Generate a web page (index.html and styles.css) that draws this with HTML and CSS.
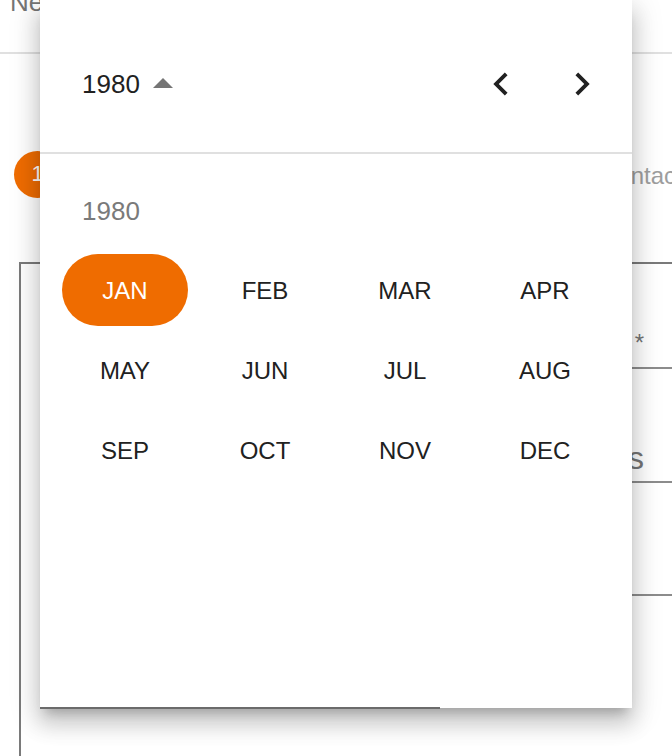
FILE: index.html
```html
<!DOCTYPE html>
<html lang="es">
<head>
<meta charset="utf-8">
<title>Selector de mes</title>
<link rel="stylesheet" href="styles.css">
</head>
<body>
<div class="page">
  <div class="topbar"><span class="topbar-title">New</span></div>
  <div class="stepper">
    <div class="step-circle">1</div>
    <div class="step-label">Contacto</div>
  </div>
  <div class="form-box">
    <div class="fields">
      <div class="field field-1"><span class="field-label">Fecha de nacimiento *</span></div>
      <div class="field field-2"><span class="field-value">Datos</span></div>
      <div class="field field-3"></div>
    </div>
  </div>
</div>

<div class="popup">
  <div class="popup-header">
    <button class="year-switch" type="button">
      <span class="year-text">1980</span>
      <svg class="drop-arrow" width="20" height="10" viewBox="0 0 20 10"><polygon points="0,10 20,10 10,0" fill="#757575"/></svg>
    </button>
    <div class="nav">
      <button class="nav-btn" type="button" aria-label="Anterior">
        <svg width="46" height="46" viewBox="0 0 24 24"><path d="M15.41 7.41 14 6l-6 6 6 6 1.41-1.41L10.83 12z" fill="#212121"/></svg>
      </button>
      <button class="nav-btn" type="button" aria-label="Siguiente">
        <svg width="46" height="46" viewBox="0 0 24 24"><path d="M10 6 8.59 7.41 13.17 12l-4.58 4.59L10 18l6-6z" fill="#212121"/></svg>
      </button>
    </div>
  </div>
  <div class="popup-body">
    <div class="year-label">1980</div>
    <div class="month-grid">
      <div class="cell"><button class="month selected" type="button">JAN</button></div>
      <div class="cell"><button class="month" type="button">FEB</button></div>
      <div class="cell"><button class="month" type="button">MAR</button></div>
      <div class="cell"><button class="month" type="button">APR</button></div>
      <div class="cell"><button class="month" type="button">MAY</button></div>
      <div class="cell"><button class="month" type="button">JUN</button></div>
      <div class="cell"><button class="month" type="button">JUL</button></div>
      <div class="cell"><button class="month" type="button">AUG</button></div>
      <div class="cell"><button class="month" type="button">SEP</button></div>
      <div class="cell"><button class="month" type="button">OCT</button></div>
      <div class="cell"><button class="month" type="button">NOV</button></div>
      <div class="cell"><button class="month" type="button">DEC</button></div>
    </div>
  </div>
  <div class="popup-underline"></div>
</div>
</body>
</html>
```
FILE: styles.css
```css
* { box-sizing: border-box; }
html, body {
  margin: 0;
  padding: 0;
  width: 672px;
  height: 756px;
  overflow: hidden;
  background: #ffffff;
  font-family: "Liberation Sans", Arial, sans-serif;
}
body { position: relative; }

.page { width: 672px; overflow: hidden; height: 756px; }

.topbar {
  height: 54px;
  border-bottom: 2px solid #e0e0e0;
  padding-left: 10px;
  overflow: hidden;
}
.topbar-title {
  display: block;
  margin-top: -13px;
  font-size: 26px;
  line-height: 30px;
  color: #757575;
  white-space: nowrap;
}

.stepper {
  display: flex;
  align-items: center;
  margin-top: 96px;
  padding-left: 14px;
  height: 48px;
  white-space: nowrap;
}
.step-circle {
  width: 47px;
  height: 47px;
  border-radius: 50%;
  background: #ef6c00;
  color: #ffffff;
  font-size: 22px;
  display: flex;
  align-items: center;
  justify-content: center;
  flex: none;
}
.step-label {
  margin-left: 539px;
  font-size: 24px;
  color: #9e9e9e;
  line-height: 28px;
  margin-top: 3px;
  flex: none;
}

.form-box {
  margin-top: 64px;
  margin-left: 19px;
  width: 700px;
  height: 520px;
  border-top: 2px solid #7a7a7a;
  border-left: 2px solid #7a7a7a;
}
.fields {
  margin-left: 380px;
}
.field {
  border-bottom: 2px solid #8c8c8c;
  padding-right: 75px;
  display: flex;
  align-items: flex-end;
  justify-content: flex-end;
  white-space: nowrap;
}
.field-1 { height: 105px; padding-bottom: 10px; }
.field-2 { height: 114px; padding-bottom: 5px; }
.field-3 { height: 113px; }
.field-label {
  font-size: 24px;
  line-height: 28px;
  color: #757575;
}
.field-value {
  font-size: 32px;
  line-height: 36px;
  color: #757575;
}

/* Popup */
.popup {
  position: absolute;
  left: 40px;
  top: 0;
  width: 592px;
  height: 708px;
  background: #ffffff;
  box-shadow: 0 10px 10px -6px rgba(0,0,0,0.2),
              0 16px 20px 2px rgba(0,0,0,0.14),
              0 6px 28px 4px rgba(0,0,0,0.12);
}
.popup-header {
  height: 154px;
  padding: 16px 27px 0 42px;
  border-bottom: 2px solid #e0e0e0;
  display: flex;
  align-items: center;
  justify-content: space-between;
}
.year-switch {
  display: flex;
  align-items: center;
  background: none;
  border: 0;
  padding: 0;
  font-family: inherit;
  cursor: pointer;
}
.year-text {
  font-size: 26px;
  line-height: 30px;
  color: #212121;
}
.drop-arrow {
  margin-left: 13px;
  margin-top: -2px;
}
.nav {
  display: flex;
  gap: 35px;
}
.nav-btn {
  width: 46px;
  height: 46px;
  padding: 0;
  border: 0;
  background: none;
  display: flex;
  align-items: center;
  justify-content: center;
  cursor: pointer;
}
.nav-btn svg { display: block; }

.popup-body { padding: 0 15px; }
.year-label {
  margin-top: 42px;
  margin-left: 27px;
  font-size: 26px;
  line-height: 30px;
  color: #7a7a7a;
}
.month-grid {
  margin-top: 24px;
  display: grid;
  grid-template-columns: repeat(4, 140px);
  grid-auto-rows: 80px;
}
.cell {
  display: flex;
  align-items: center;
  justify-content: center;
}
.month {
  width: 126px;
  height: 72px;
  border-radius: 36px;
  border: 0;
  background: transparent;
  font-family: inherit;
  font-size: 24px;
  line-height: 28px;
  color: #212121;
  padding: 2px 0 0;
  cursor: pointer;
}
.month.selected {
  background: #ef6c00;
  color: #ffffff;
}
.popup-underline {
  position: absolute;
  left: 0;
  top: 707px;
  width: 400px;
  height: 2px;
  background: #6b6b6b;
}
```
